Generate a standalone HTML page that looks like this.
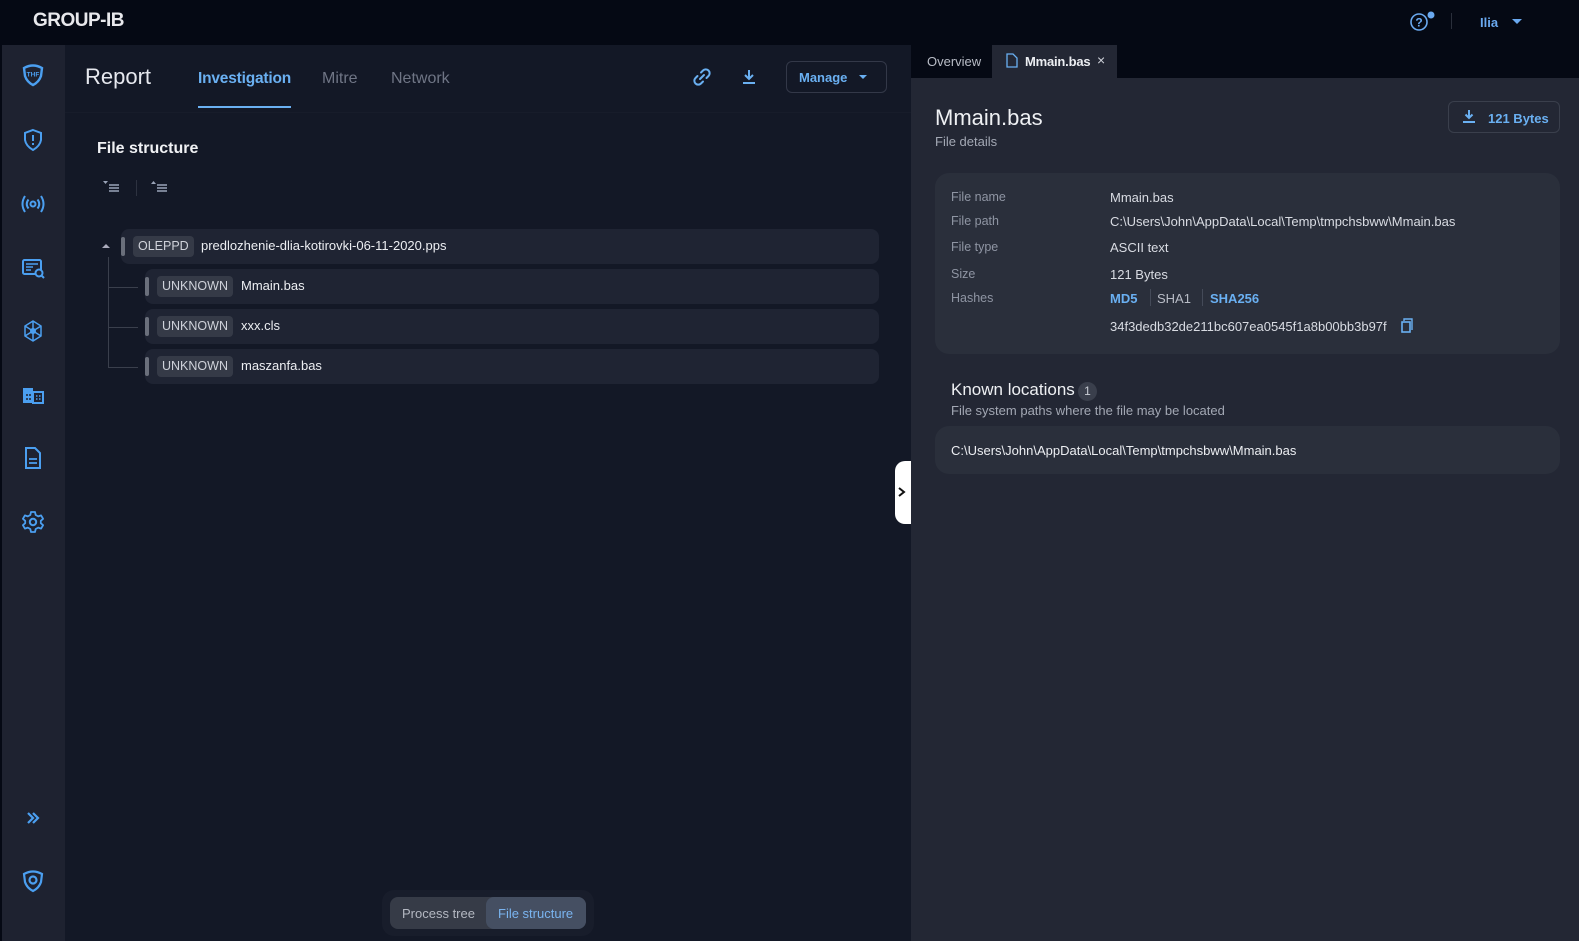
<!DOCTYPE html>
<html><head><meta charset="utf-8"><style>
*{box-sizing:border-box;margin:0;padding:0}
body{width:1579px;height:941px;background:#050914;font-family:"Liberation Sans",sans-serif;overflow:hidden;position:relative;color:#e6e8ee}
.abs{position:absolute}
.top{left:0;top:0;width:1579px;height:45px;background:#050914}
.logo{left:33px;top:10px;font-size:19px;font-weight:bold;color:#e8e8ec;letter-spacing:-0.5px}
.side{left:2px;top:45px;width:63px;height:896px;background:#1e2230}
.main{left:65px;top:45px;width:846px;height:896px;background:#131826}
.right{left:911px;top:78px;width:668px;height:863px;background:#232734}
.ico{position:absolute;left:20px;width:26px;height:26px}
.tab{font-size:16px;color:#6f7585}
.row{position:absolute;height:35px;background:#1f2433;border-radius:8px}
.badge{position:absolute;top:7px;height:21px;padding:0 5px;background:#353a47;border-radius:4px;font-size:12.5px;color:#cfd2da;line-height:21px}
.bar{position:absolute;left:0;top:8px;width:4px;height:19px;background:#6a6f7b;border-radius:2px}
.name{position:absolute;top:9px;font-size:13px;color:#eceef2}
.lbl{position:absolute;left:16px;font-size:12.5px;color:#8f95a3}
.val{position:absolute;left:175px;font-size:13px;color:#d9dce3}
</style></head><body>
<div class="abs top"></div>
<div class="abs logo">GROUP-IB</div>
<svg class="abs" style="left:1408px;top:10px" width="30" height="24"><circle cx="11" cy="12" r="8" fill="none" stroke="#6aa9f0" stroke-width="1.6"/><text x="11" y="16.5" font-size="12" font-weight="bold" text-anchor="middle" fill="#6aa9f0" font-family="Liberation Sans">?</text><circle cx="23" cy="5" r="3.5" fill="#6aa9f0"/></svg>
<div class="abs" style="left:1451px;top:13px;width:1px;height:16px;background:#2a2f3b"></div>
<div class="abs" style="left:1480px;top:15px;font-size:13px;color:#6aa9f0;font-weight:bold">Ilia</div>
<div class="abs" style="left:1512px;top:19px;width:0;height:0;border-left:5px solid transparent;border-right:5px solid transparent;border-top:5px solid #6aa9f0"></div>

<div class="abs side"></div>
<svg class="ico" style="top:62px" viewBox="0 0 26 26"><path d="M4 6 Q13 1 22 6 L21 14 Q19 20 13 23 Q7 20 5 14 Z" fill="none" stroke="#4b9ff0" stroke-width="2.4"/><text x="13" y="14.5" font-size="6.5" font-weight="bold" fill="#4b9ff0" text-anchor="middle" font-family="Liberation Sans">THF</text></svg>
<svg class="ico" style="top:127px" viewBox="0 0 26 26"><path d="M13 3 L21 6 V13 Q20 19 13 23 Q6 19 5 13 V6 Z" fill="none" stroke="#4b9ff0" stroke-width="2"/><rect x="12" y="8" width="2" height="6" fill="#4b9ff0"/><rect x="12" y="16" width="2" height="2" fill="#4b9ff0"/></svg>
<svg class="ico" style="top:191px" viewBox="0 0 26 26"><circle cx="13" cy="13" r="2.5" fill="none" stroke="#4b9ff0" stroke-width="2"/><path d="M8.5 8.5 Q5 13 8.5 17.5 M17.5 8.5 Q21 13 17.5 17.5 M5 5 Q0 13 5 21 M21 5 Q26 13 21 21" fill="none" stroke="#4b9ff0" stroke-width="2"/></svg>
<svg class="ico" style="top:255px" viewBox="0 0 26 26"><rect x="3" y="5" width="18" height="14" rx="1.5" fill="none" stroke="#4b9ff0" stroke-width="2"/><path d="M6 9h12M6 12h7M6 15h5" stroke="#4b9ff0" stroke-width="1.6"/><circle cx="19" cy="18" r="3.5" fill="#1e2230" stroke="#4b9ff0" stroke-width="2"/><path d="M21.5 20.5 L24 23" stroke="#4b9ff0" stroke-width="2"/></svg>
<svg class="ico" style="top:318px" viewBox="0 0 26 26"><path d="M13 3 L21 8 L21 18 L13 23 L5 18 L5 8 Z M13 3 V23 M5 8 L21 18 M21 8 L5 18" fill="none" stroke="#4b9ff0" stroke-width="1.5"/><circle cx="13" cy="13" r="3" fill="#4b9ff0"/></svg>
<svg class="ico" style="top:382px" viewBox="0 0 26 26"><rect x="3" y="6" width="10" height="15" fill="#4b9ff0"/><rect x="13" y="10" width="10" height="11" fill="none" stroke="#4b9ff0" stroke-width="2"/><path d="M6 13h2M9 13h2M6 17h2M9 17h2" stroke="#1e2230" stroke-width="1.5"/><path d="M16 14h1.5M19 14h1.5M16 17h1.5M19 17h1.5" stroke="#4b9ff0" stroke-width="1.5"/></svg>
<svg class="ico" style="top:445px" viewBox="0 0 26 26"><path d="M6 3 H15 L20 8 V23 H6 Z" fill="none" stroke="#4b9ff0" stroke-width="2"/><path d="M9 14h8M9 18h8" stroke="#4b9ff0" stroke-width="1.8"/></svg>
<svg class="ico" style="top:509px" viewBox="0 0 26 26"><circle cx="13" cy="13" r="3.2" fill="none" stroke="#4b9ff0" stroke-width="2"/><path d="M11 3h4l.7 3 2.5 1.4 2.9-1 2 3.4-2.3 2 0 2.4 2.3 2-2 3.4-2.9-1L15.7 20 15 23h-4l-.7-3-2.5-1.4-2.9 1-2-3.4 2.3-2v-2.4l-2.3-2 2-3.4 2.9 1L10.3 6Z" fill="none" stroke="#4b9ff0" stroke-width="1.8" stroke-linejoin="round"/></svg>
<svg class="ico" style="top:805px" viewBox="0 0 26 26"><path d="M8 8 L13 13 L8 18 M13 8 L18 13 L13 18" fill="none" stroke="#4b9ff0" stroke-width="2.2"/></svg>
<svg class="ico" style="top:868px" viewBox="0 0 26 26"><path d="M4 6 Q13 1 22 6 L21 14 Q19 20 13 23 Q7 20 5 14 Z" fill="none" stroke="#4b9ff0" stroke-width="2.2"/><circle cx="13" cy="12" r="3.5" fill="none" stroke="#4b9ff0" stroke-width="2.2"/></svg>

<div class="abs main"></div>
<div class="abs" style="left:85px;top:64px;font-size:22px;color:#e6e8ee">Report</div>
<div class="abs" style="left:198px;top:70px;font-size:15.5px;color:#6ab0f2;font-weight:bold;letter-spacing:-0.2px">Investigation</div>
<div class="abs" style="left:198px;top:106px;width:93px;height:2px;background:#6ab0f2"></div>
<div class="abs tab" style="left:322px;top:70px">Mitre</div>
<div class="abs tab" style="left:391px;top:70px">Network</div>
<div class="abs" style="left:65px;top:112px;width:846px;height:1px;background:#171c2a"></div>
<svg class="abs" style="left:692px;top:67px" width="20" height="20" viewBox="0 0 20 20"><path d="M8 12 L12 8 M9 5.5 L11 3.5 A3 3 0 0 1 16.5 9 L14.5 11 M11 14.5 L9 16.5 A3 3 0 0 1 3.5 11 L5.5 9" fill="none" stroke="#6ab0f2" stroke-width="2" stroke-linecap="round"/></svg>
<svg class="abs" style="left:740px;top:67px" width="18" height="20" viewBox="0 0 18 20"><path d="M9 3 V12 M5 8 L9 12 L13 8" fill="none" stroke="#6ab0f2" stroke-width="2"/><path d="M3 16 H15" stroke="#6ab0f2" stroke-width="2"/></svg>
<div class="abs" style="left:786px;top:61px;width:101px;height:32px;border:1px solid #333848;border-radius:6px"></div>
<div class="abs" style="left:799px;top:70px;font-size:13px;color:#6ab0f2;font-weight:bold">Manage</div>
<div class="abs" style="left:859px;top:75px;width:0;height:0;border-left:4.5px solid transparent;border-right:4.5px solid transparent;border-top:4.5px solid #6ab0f2"></div>

<div class="abs" style="left:97px;top:140px;font-size:16px;color:#f0f1f4;font-weight:bold">File structure</div>
<svg class="abs" style="left:103px;top:180px" width="18" height="12"><path d="M0 1h5l-2.5 3z" fill="#9aa4b8"/><path d="M6 5h10M6 8h10M6 11h10" stroke="#9aa4b8" stroke-width="1.4"/></svg>
<div class="abs" style="left:136px;top:180px;width:1px;height:16px;background:#2d3240"></div>
<svg class="abs" style="left:151px;top:180px" width="18" height="12"><path d="M0 4h5l-2.5-3z" fill="#9aa4b8"/><path d="M6 5h10M6 8h10M6 11h10" stroke="#9aa4b8" stroke-width="1.4"/></svg>

<div class="abs" style="left:102px;top:244px;width:0;height:0;border-left:4px solid transparent;border-right:4px solid transparent;border-bottom:4px solid #aab"></div>
<div class="abs" style="left:108px;top:257px;width:1px;height:110px;background:#3a3f4c"></div>
<div class="abs" style="left:108px;top:287px;width:30px;height:1px;background:#3a3f4c"></div>
<div class="abs" style="left:108px;top:327px;width:30px;height:1px;background:#3a3f4c"></div>
<div class="abs" style="left:108px;top:367px;width:30px;height:1px;background:#3a3f4c"></div>
<div class="row" style="left:121px;top:229px;width:758px"><div class="bar"></div><div class="badge" style="left:12px">OLEPPD</div><div class="name" style="left:80px">predlozhenie-dlia-kotirovki-06-11-2020.pps</div></div>
<div class="row" style="left:145px;top:269px;width:734px"><div class="bar"></div><div class="badge" style="left:12px">UNKNOWN</div><div class="name" style="left:96px">Mmain.bas</div></div>
<div class="row" style="left:145px;top:309px;width:734px"><div class="bar"></div><div class="badge" style="left:12px">UNKNOWN</div><div class="name" style="left:96px">xxx.cls</div></div>
<div class="row" style="left:145px;top:349px;width:734px"><div class="bar"></div><div class="badge" style="left:12px">UNKNOWN</div><div class="name" style="left:96px">maszanfa.bas</div></div>

<div class="abs" style="left:382px;top:890px;width:212px;height:46px;background:#181d2b;border-radius:12px"></div>
<div class="abs" style="left:390px;top:897px;width:196px;height:32px;background:#363b47;border-radius:8px"></div>
<div class="abs" style="left:486px;top:897px;width:100px;height:32px;background:#454f62;border-radius:8px"></div>
<div class="abs" style="left:402px;top:906px;font-size:13px;color:#b4b8c2">Process tree</div>
<div class="abs" style="left:498px;top:906px;font-size:13px;color:#7ab4f0">File structure</div>

<div class="abs" style="left:895px;top:461px;width:16px;height:63px;background:#fff;border-radius:10px 0 0 10px"></div>
<svg class="abs" style="left:897px;top:486px" width="10" height="12"><path d="M2 2 L7 6 L2 10" fill="none" stroke="#111" stroke-width="2"/></svg>

<div class="abs" style="left:911px;top:45px;width:668px;height:33px;background:#050914"></div>
<div class="abs" style="left:927px;top:54px;font-size:13px;color:#b8bcc6">Overview</div>
<div class="abs" style="left:992px;top:45px;width:125px;height:33px;background:#232734"></div>
<svg class="abs" style="left:1006px;top:53px" width="12" height="15"><path d="M1 1 H7 L11 5 V14 H1 Z" fill="none" stroke="#6ab0f2" stroke-width="1.3"/></svg>
<div class="abs" style="left:1025px;top:54px;font-size:13px;color:#eceef2;font-weight:bold;letter-spacing:-0.2px">Mmain.bas</div>
<div class="abs" style="left:1097px;top:52px;font-size:14px;color:#cfd2da">×</div>

<div class="abs right"></div>
<div class="abs" style="left:935px;top:105px;font-size:22px;color:#eef0f3">Mmain.bas</div>
<div class="abs" style="left:935px;top:134px;font-size:13px;color:#a3a8b4">File details</div>
<div class="abs" style="left:1448px;top:101px;width:112px;height:32px;border:1px solid #3a3f4c;border-radius:6px"></div>
<svg class="abs" style="left:1462px;top:109px" width="14" height="16"><path d="M7 1 V9 M3.5 5.5 L7 9 L10.5 5.5" fill="none" stroke="#6ab0f2" stroke-width="2"/><path d="M1 13 H13" stroke="#6ab0f2" stroke-width="2"/></svg>
<div class="abs" style="left:1488px;top:111px;font-size:13px;color:#6ab0f2;font-weight:bold">121 Bytes</div>

<div class="abs" style="left:935px;top:173px;width:625px;height:181px;background:#2a2f3b;border-radius:14px">
<div class="lbl" style="top:17px">File name</div><div class="val" style="top:17px">Mmain.bas</div>
<div class="lbl" style="top:41px">File path</div><div class="val" style="top:41px">C:\Users\John\AppData\Local\Temp\tmpchsbww\Mmain.bas</div>
<div class="lbl" style="top:67px">File type</div><div class="val" style="top:67px">ASCII text</div>
<div class="lbl" style="top:94px">Size</div><div class="val" style="top:94px">121 Bytes</div>
<div class="lbl" style="top:118px">Hashes</div>
<div class="val" style="top:118px;color:#6ab0f2;font-weight:bold">MD5</div>
<div class="abs" style="left:215px;top:116px;width:1px;height:17px;background:#444a58"></div>
<div class="val" style="top:118px;left:222px;color:#b8bcc6">SHA1</div>
<div class="abs" style="left:267px;top:116px;width:1px;height:17px;background:#444a58"></div>
<div class="val" style="top:118px;left:275px;color:#6ab0f2;font-weight:bold">SHA256</div>
<div class="val" style="top:146px">34f3dedb32de211bc607ea0545f1a8b00bb3b97f</div>
<svg class="abs" style="left:466px;top:145px" width="14" height="16"><path d="M3 3 V1 H11 V12" fill="none" stroke="#6ab0f2" stroke-width="1.4"/><rect x="1" y="4" width="8" height="10" fill="none" stroke="#6ab0f2" stroke-width="1.6"/></svg>
</div>

<div class="abs" style="left:951px;top:380px;font-size:17px;color:#eef0f3">Known locations</div>
<div class="abs" style="left:1078px;top:382px;width:19px;height:19px;border-radius:50%;background:#3a3f4c;font-size:12px;color:#c8ccd4;text-align:center;line-height:19px">1</div>
<div class="abs" style="left:951px;top:403px;font-size:13px;color:#a3a8b4">File system paths where the file may be located</div>
<div class="abs" style="left:935px;top:426px;width:625px;height:48px;background:#2a2f3b;border-radius:14px"></div>
<div class="abs" style="left:951px;top:443px;font-size:13px;color:#eceef2">C:\Users\John\AppData\Local\Temp\tmpchsbww\Mmain.bas</div>
</body></html>
